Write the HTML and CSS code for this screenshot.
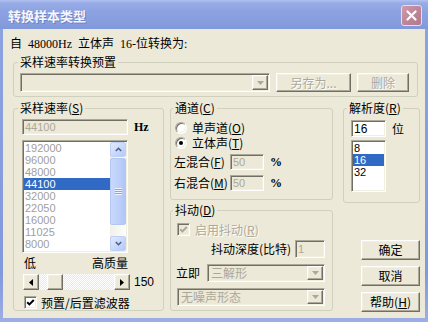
FILE: index.html
```html
<!DOCTYPE html>
<html>
<head>
<meta charset="utf-8">
<title>转换样本类型</title>
<link rel="stylesheet" href="styles.css">
</head>
<body>
<div class="window">
  <div class="titlebar">
    <span class="title">转换样本类型</span>
    <span class="close"><svg width="11" height="11" viewBox="0 0 11 11"><path d="M1.5 1.5l8 8M9.5 1.5l-8 8" stroke="#fff" stroke-width="2.2" stroke-linecap="round"/></svg></span>
  </div>
  <div class="client">
    <div class="intro">自&ensp;<span class="lat">48000Hz</span>&ensp;立体声&ensp;<span class="lat">16-</span>位转换为<span class="lat">:</span></div>

    <fieldset class="group preset">
      <legend>采样速率转换预置</legend>
      <div class="preset-row">
        <div class="combo sunken disabled preset-combo">
          <span class="combo-text"></span>
          <span class="drop raised"><svg width="7" height="4" viewBox="0 0 7 4"><path d="M0 0h7L3.5 4z" fill="#aca899"/></svg></span>
        </div>
        <button class="btn raised disabled saveas">另存为...</button>
        <button class="btn raised disabled del">删除</button>
      </div>
    </fieldset>

    <div class="main">
      <fieldset class="group rate">
        <legend>采样速率(<u>S</u>)</legend>
        <div class="edit-row">
          <div class="edit sunken disabled rate-edit">44100</div>
          <span class="hz">Hz</span>
        </div>
        <div class="listbox sunken rate-list">
          <div class="items gray">
            <div class="item">192000</div>
            <div class="item">96000</div>
            <div class="item">48000</div>
            <div class="item sel">44100</div>
            <div class="item">32000</div>
            <div class="item">22050</div>
            <div class="item">16000</div>
            <div class="item">11025</div>
            <div class="item">8000</div>
          </div>
          <div class="vscroll">
            <div class="sb-btn"><svg width="7" height="5" viewBox="0 0 7 5"><path d="M0.8 4L3.5 1.3 6.2 4" fill="none" stroke="#4d6185" stroke-width="1.6"/></svg></div>
            <div class="sb-thumb"><span class="grip"></span></div>
            <div class="sb-track"></div>
            <div class="sb-btn"><svg width="7" height="5" viewBox="0 0 7 5"><path d="M0.8 1L3.5 3.7 6.2 1" fill="none" stroke="#4d6185" stroke-width="1.6"/></svg></div>
          </div>
        </div>
        <div class="quality-labels"><span>低</span><span>高质量</span></div>
        <div class="slider">
          <span class="arrow-btn raised"><svg width="4" height="7" viewBox="0 0 4 7"><path d="M4 0v7L0 3.5z" fill="#000"/></svg></span>
          <span class="track"><span class="thumb raised"></span></span>
          <span class="arrow-btn raised"><svg width="4" height="7" viewBox="0 0 4 7"><path d="M0 0v7l4-3.5z" fill="#000"/></svg></span>
          <span class="slider-val">150</span>
        </div>
        <div class="check-row filter">
          <span class="checkbox sunken"><svg width="9" height="9" viewBox="0 0 9 9"><path d="M1.2 4.2l2.2 2.2L7.8 2" fill="none" stroke="#000" stroke-width="2"/></svg></span>
          <span class="check-label">预置/后置滤波器</span>
        </div>
      </fieldset>

      <div class="mid">
        <fieldset class="group channel">
          <legend>通道(<u>C</u>)</legend>
          <div class="radio-row"><span class="radio"></span><span class="radio-label">单声道(<u>O</u>)</span></div>
          <div class="radio-row second"><span class="radio on"></span><span class="radio-label">立体声(<u>T</u>)</span></div>
          <div class="mix-row first">
            <span class="mix-label">左混合(<u>F</u>)</span>
            <div class="edit sunken disabled mix-edit">50</div>
            <span class="pct">%</span>
          </div>
          <div class="mix-row">
            <span class="mix-label">右混合(<u>M</u>)</span>
            <div class="edit sunken disabled mix-edit">50</div>
            <span class="pct">%</span>
          </div>
        </fieldset>

        <fieldset class="group dither">
          <legend>抖动(<u>D</u>)</legend>
          <div class="check-row enable">
            <span class="checkbox sunken disabled"><svg width="9" height="9" viewBox="0 0 9 9"><path d="M1.2 4.2l2.2 2.2L7.8 2" fill="none" stroke="#aca899" stroke-width="2"/></svg></span>
            <span class="check-label gray-text">启用抖动(<u>R</u>)</span>
          </div>
          <div class="depth-row">
            <span>抖动深度(比特)</span>
            <div class="edit sunken disabled depth-edit">1</div>
          </div>
          <div class="now-row">
            <span class="now-label">立即</span>
            <div class="combo sunken disabled now-combo">
              <span class="combo-text">三解形</span>
              <span class="drop raised"><svg width="7" height="4" viewBox="0 0 7 4"><path d="M0 0h7L3.5 4z" fill="#aca899"/></svg></span>
            </div>
          </div>
          <div class="combo sunken disabled shape-combo">
            <span class="combo-text">无噪声形态</span>
            <span class="drop raised"><svg width="7" height="4" viewBox="0 0 7 4"><path d="M0 0h7L3.5 4z" fill="#aca899"/></svg></span>
          </div>
        </fieldset>
      </div>

      <div class="right">
        <fieldset class="group resolution">
          <legend>解析度(<u>R</u>)</legend>
          <div class="edit-row">
            <div class="edit sunken bits-edit">16</div>
            <span class="unit">位</span>
          </div>
          <div class="listbox sunken bits-list">
            <div class="items">
              <div class="item">8</div>
              <div class="item sel">16</div>
              <div class="item">32</div>
            </div>
          </div>
        </fieldset>
        <div class="buttons">
          <button class="btn raised">确定</button>
          <button class="btn raised">取消</button>
          <button class="btn raised">帮助(<u>H</u>)</button>
        </div>
      </div>
    </div>
  </div>
</div>
</body>
</html>
```

FILE: styles.css
```css
* {
  box-sizing: border-box;
  margin: 0;
  padding: 0;
}

html, body {
  width: 428px;
  height: 322px;
  overflow: hidden;
}

body {
  font-family: "Noto Sans CJK SC", "Liberation Sans", sans-serif;
  font-size: 12px;
  line-height: 12px;
  color: #000;
  background: #8ba0de;
}

u {
  text-decoration: underline;
  text-underline-offset: 1px;
}

.window {
  width: 428px;
  height: 322px;
  display: flex;
  flex-direction: column;
  background: linear-gradient(180deg, #8ea3e0 0%, #8299dc 85%, #9eaee6 100%);
}

.titlebar {
  height: 29px;
  flex: none;
  display: flex;
  align-items: center;
  justify-content: space-between;
  padding: 2px 6px 0 8px;
  background: linear-gradient(180deg, #b2c1f1 0px, #98ace6 3px, #8ca2e1 12px, #859cdd 24px, #8098dc 29px);
}

.title {
  font-weight: bold;
  font-size: 13px;
  line-height: 14px;
  color: #f4f6fd;
  text-shadow: 1px 1px 0 #6f82c2;
}

.close {
  width: 21px;
  height: 21px;
  border: 1px solid #eadbe6;
  border-radius: 3px;
  background: linear-gradient(135deg, #cf9aab 0%, #bb8396 60%, #b07a8e 100%);
  display: flex;
  align-items: center;
  justify-content: center;
}

.client {
  flex: 1;
  margin: 0 3px 4px 3px;
  background: #ece9d8;
  padding: 8px 0 0 7px;
}

.intro {
  height: 12px;
  white-space: nowrap;
}

.lat {
  font-family: "Liberation Serif", serif;
  font-size: 12px;
}

/* group boxes */
.group {
  display: block;
  min-width: 0;
  border: 1px solid #d0d0bf;
  border-radius: 3px;
}

.group legend {
  line-height: 12px;
  padding: 0 2px;
  background: #ece9d8;
}

.preset {
  margin: 7px 0 0 3px;
  width: 405px;
  padding: 5px 8px 4px 6px;
}

.preset legend {
  margin-left: -2px;
}

.preset-row {
  display: flex;
  gap: 6px;
  height: 19px;
}

/* 3D borders */
.raised {
  background: #ece9d8;
  border: 1px solid;
  border-color: #fff #716f64 #716f64 #fff;
  box-shadow: inset -1px -1px 0 #aca899, inset 1px 1px 0 #f1efe2;
}

.sunken {
  border: 1px solid;
  border-color: #aca899 #fff #fff #aca899;
  box-shadow: inset 1px 1px 0 #716f64, inset -1px -1px 0 #f1efe2;
  padding: 1px;
}

.btn {
  font-family: "Noto Sans CJK SC", sans-serif;
  font-size: 12px;
  line-height: 12px;
  color: #000;
  display: flex;
  align-items: center;
  justify-content: center;
}

.btn.disabled {
  color: #aca899;
  text-shadow: 1px 1px 0 #fff;
}

.saveas {
  width: 75px;
}

.del {
  width: 52px;
}

/* combo */
.combo {
  display: flex;
  align-items: stretch;
  background: #fff;
}

.combo.disabled {
  background: #ece9d8;
}

.combo-text {
  flex: 1;
  padding-left: 2px;
  display: flex;
  align-items: center;
  color: #aca899;
  white-space: nowrap;
}

.drop {
  width: 16px;
  display: flex;
  align-items: center;
  justify-content: center;
}

.preset-combo {
  width: 250px;
}

/* main row */
.main {
  display: flex;
  align-items: flex-start;
  margin-top: 5px;
}

.rate {
  margin-left: 3px;
  width: 151px;
  height: 209px;
  padding: 5px 0 0 8px;
}

.rate legend {
  margin-left: -4px;
}

.edit-row {
  display: flex;
  align-items: center;
}

.edit {
  font-family: "Liberation Sans", sans-serif;
  font-size: 11px;
  line-height: 12px;
  background: #fff;
  display: flex;
  align-items: center;
  padding-left: 2px;
}

.edit.disabled {
  background: #ece9d8;
  color: #aca899;
}

.rate-edit {
  width: 106px;
  height: 16px;
}

.hz {
  margin-left: 6px;
  font-family: "Liberation Serif", serif;
  font-size: 12px;
  font-weight: bold;
}

/* list boxes */
.listbox {
  display: flex;
  background: #fff;
}

.items {
  flex: 1;
  font-family: "Liberation Sans", sans-serif;
  font-size: 11px;
}

.items.gray {
  color: #a0a0a0;
}

.item {
  height: 12px;
  line-height: 12px;
  padding-left: 1px;
}

.item.sel {
  background: #316ac5;
  color: #fff;
}

.rate-list {
  margin-top: 5px;
  width: 106px;
  height: 113px;
}

.vscroll {
  width: 16px;
  display: flex;
  flex-direction: column;
  background: linear-gradient(90deg, #f1f0ea, #fdfdfb);
}

.sb-btn {
  height: 15px;
  border: 1px solid #c0d0f4;
  border-radius: 2px;
  background: linear-gradient(135deg, #e1eafe 0%, #c6d6fc 60%, #b5c9f6 100%);
  display: flex;
  align-items: center;
  justify-content: center;
}

.sb-thumb {
  margin-top: 1px;
  height: 67px;
  border: 1px solid #b4c7f1;
  border-radius: 2px;
  background: linear-gradient(90deg, #c9d8fc 0%, #bccffa 60%, #b1c6f6 100%);
  display: flex;
  align-items: center;
  justify-content: center;
}

.grip {
  width: 7px;
  height: 7px;
  background: repeating-linear-gradient(180deg, #eef3ff 0 1px, #8ca5e2 1px 2px);
}

.sb-track {
  flex: 1;
}

.quality-labels {
  margin-top: 4px;
  width: 106px;
  padding-left: 2px;
  display: flex;
  justify-content: space-between;
}

.slider {
  margin: 5px 0 0 1px;
  height: 16px;
  display: flex;
  align-items: center;
}

.arrow-btn {
  width: 16px;
  height: 16px;
  display: flex;
  align-items: center;
  justify-content: center;
}

.track {
  width: 75px;
  height: 16px;
  padding-left: 8px;
  display: flex;
  background: repeating-conic-gradient(#fff 0 25%, #ece9d8 0 50%) 0 0 / 2px 2px;
}

.thumb {
  width: 16px;
  height: 16px;
}

.slider-val {
  margin-left: 4px;
  font-family: "Liberation Sans", sans-serif;
  font-size: 12px;
}

.check-row {
  display: flex;
  align-items: center;
  height: 13px;
}

.filter {
  margin: 6px 0 0 2px;
}

.checkbox {
  width: 13px;
  height: 13px;
  background: #fff;
  display: flex;
  align-items: center;
  justify-content: center;
}

.checkbox.disabled {
  background: #ece9d8;
}

.check-label {
  margin-left: 4px;
  white-space: nowrap;
}

.gray-text {
  color: #aca899;
  text-shadow: 1px 1px 0 #fff;
}

/* middle column */
.mid {
  margin-left: 6px;
  width: 163px;
  display: flex;
  flex-direction: column;
}

.channel {
  height: 98px;
  padding: 7px 7px 0 3px;
}

.channel legend,
.dither legend {
  margin-left: -1px;
}

.radio-row {
  height: 14px;
  display: flex;
  align-items: center;
}

.radio-row.second {
  margin-top: 1px;
}

.radio {
  margin-left: 1px;
  width: 12px;
  height: 12px;
  border-radius: 50%;
  background: #fff;
  border: 1px solid;
  border-color: #aca899 #fff #fff #aca899;
  box-shadow: inset 1px 1px 0 #716f64, inset -1px -1px 0 #f1efe2;
  display: flex;
  align-items: center;
  justify-content: center;
}

.radio.on::after {
  content: "";
  width: 4px;
  height: 4px;
  border-radius: 50%;
  background: #000;
}

.radio-label {
  margin-left: 5px;
}

.mix-row {
  display: flex;
  align-items: center;
  margin-top: 5px;
}

.mix-row.first {
  margin-top: 4px;
}

.mix-label {
  width: 56px;
  white-space: nowrap;
}

.mix-edit {
  width: 34px;
  height: 16px;
}

.pct {
  margin-left: 6px;
  font-family: "Liberation Serif", serif;
  font-weight: bold;
}

.dither {
  margin-top: 4px;
  height: 107px;
  padding: 7px 7px 0 3px;
}

.enable {
  margin-left: 3px;
}

.enable .check-label {
  margin-left: 5px;
}

.depth-row {
  margin-top: 4px;
  height: 18px;
  display: flex;
  align-items: center;
  justify-content: flex-end;
  white-space: nowrap;
}

.depth-edit {
  margin-left: 4px;
  width: 30px;
  height: 18px;
}

.now-row {
  margin-top: 6px;
  height: 18px;
  display: flex;
  align-items: center;
  justify-content: space-between;
}

.now-label {
  margin-left: 2px;
}

.now-combo {
  width: 118px;
  height: 18px;
}

.shape-combo {
  margin: 6px 0 0 3px;
  width: 148px;
  height: 18px;
}

/* right column */
.right {
  margin-left: 10px;
  width: 77px;
  display: flex;
  flex-direction: column;
  align-items: flex-end;
}

.resolution {
  width: 77px;
  height: 101px;
  padding: 6px 0 0 7px;
}

.resolution legend {
  margin-left: -4px;
}

.bits-edit {
  width: 35px;
  height: 17px;
  font-size: 12px;
}

.unit {
  margin-left: 6px;
}

.bits-list {
  margin-top: 3px;
  width: 35px;
  height: 52px;
}

.bits-list .items {
  font-size: 11px;
}

.buttons {
  margin-top: 37px;
  display: flex;
  flex-direction: column;
  gap: 6px;
}

.buttons .btn {
  width: 59px;
  height: 20px;
}
```
